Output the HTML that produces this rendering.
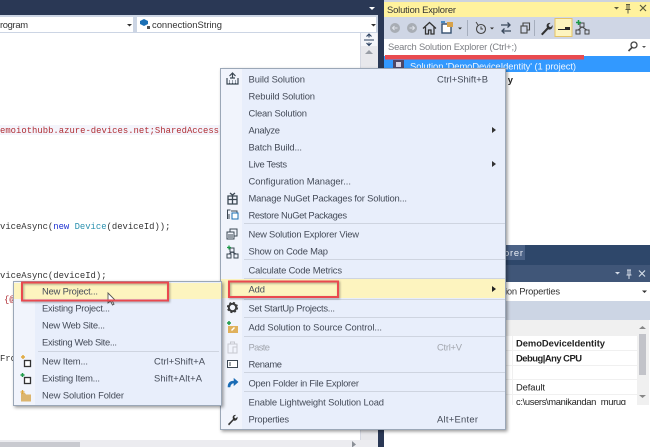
<!DOCTYPE html>
<html><head><meta charset="utf-8"><style>
html,body{margin:0;padding:0;background:#fff;width:650px;height:447px;overflow:hidden}
svg{display:block}
text{font-family:"Liberation Sans",sans-serif;font-size:9.4px;fill:#444b58;dominant-baseline:auto}
.c text{font-family:"Liberation Mono",monospace;font-size:8.9px;fill:#333}
.g{filter:url(#b)}
</style></head><body>
<svg width="650" height="447" viewBox="0 0 650 447" xmlns="http://www.w3.org/2000/svg">
<defs>
<filter id="b" x="-2%" y="-2%" width="104%" height="104%"><feGaussianBlur stdDeviation="0.3"/></filter>
<filter id="s" x="-5%" y="-5%" width="110%" height="110%"><feDropShadow dx="1.5" dy="1.5" stdDeviation="1.5" flood-color="#000" flood-opacity=".4"/></filter>
<filter id="r" x="-5%" y="-20%" width="110%" height="140%"><feDropShadow dx="1" dy="1" stdDeviation="1" flood-color="#000" flood-opacity=".35"/></filter>
</defs>
<rect width="650" height="447" fill="#fff"/>
<g class="g">
<!-- top editor chrome -->
<rect width="378" height="16" fill="#293955"/>
<path d="M369 7h6l-3 3z" fill="#fff"/>
<rect y="15" width="378" height="18" fill="#ccd5e4"/>
<rect y="17" width="133" height="15" fill="#fff"/>
<rect x="137" y="17" width="239" height="15" fill="#fff"/>
<path d="M127 24h5l-2.500 2.500z" fill="#333"/>
<path d="M371 24h5l-2.500 2.500z" fill="#333"/>
<text x="0" y="28" textLength="28" fill="#333" style="fill:#333">rogram</text>
<text x="152" y="28" textLength="70" style="fill:#333">connectionString</text>
<path d="M140 21l4-2 4 2v3l-4 2-4-2z" fill="#1c6fb5"/><rect x="147" y="26" width="3" height="3" fill="#555"/>
<!-- editor scrollbar -->
<rect x="360" y="33" width="18" height="407" fill="#e8e8ec"/>
<rect x="360" y="33" width="1" height="407" fill="#d5d8e2"/>
<rect x="361" y="33" width="16" height="13" fill="#f5f6fa"/>
<path d="M364 40h10M369 34.500v3M369 42.500v3M366.500 36.500l2.500-2.500 2.500 2.500M366.500 43l2.500 2.500 2.500-2.500" stroke="#2a3f5f" stroke-width="1.100" fill="none"/>
<path d="M365 54h8l-4-4z" fill="#9a9ea6"/>
<!-- splitter -->
<rect x="378" width="6" height="447" fill="#293955"/>
<!-- bottom scrollbar -->
<rect y="440" width="378" height="7" fill="#ececf0"/>
<rect y="442" width="80" height="5" fill="#c9cad0"/>
<path d="M352 441l4 3.500-4 3z" fill="#8b8f96"/>
<!-- code -->
<rect x="0" y="125" width="220" height="10" fill="#f4f4fb"/>
<g class="c">
<text x="0" y="133" textLength="219" style="fill:#b02f35">emoiothubb.azure-devices.net;SharedAccess</text>
<text x="0" y="229"><tspan>viceAsync(</tspan><tspan style="fill:#1b2fd0">new</tspan><tspan> </tspan><tspan style="fill:#2b91af">Device</tspan><tspan>(deviceId));</tspan></text>
<text x="0" y="278">viceAsync(deviceId);</text>
<text x="4" y="302" style="fill:#b02f35">{@</text>
<text x="0" y="361">Fro</text>
</g>
<!-- Solution explorer -->
<rect x="384" width="266" height="2" fill="#cdd3de"/>
<rect x="384" y="2" width="266" height="15" fill="#fff29d"/>
<text x="387" y="13" textLength="69" style="fill:#333">Solution Explorer</text>
<path d="M614 7h5l-2.500 2.500z" fill="#5b5a3e"/>
<path d="M626 4.500h4M627 4.500v5h2v-5M625.500 9.500h5M628 9.500v4" stroke="#5b5a3e" fill="none"/>
<path d="M640 5l6 6M646 5l-6 6" stroke="#5b5a3e" stroke-width="1.200"/>
<rect x="384" y="17" width="266" height="22" fill="#cfd6e5"/>
<circle cx="395" cy="28" r="5" fill="#a8adb4"/><path d="M397.500 28h-5M394.500 26l-2 2 2 2" stroke="#dfe3ea" fill="none"/>
<circle cx="412" cy="28" r="5" fill="#a8adb4"/><path d="M409.500 28h5M412.500 26l2 2-2 2" stroke="#dfe3ea" fill="none"/>
<path d="M423 28.500l6.500-6 6.500 6M425.500 27v7h3v-4h2.500v4h3v-7" stroke="#333" stroke-width="1.300" fill="none"/>
<rect x="442" y="24" width="9" height="9" fill="#fff" stroke="#35506f" stroke-width="1.400"/><rect x="447" y="22" width="6" height="5" fill="#d8a24a"/><path d="M441 22h4" stroke="#1c6fb5" stroke-width="1.500"/>
<path d="M458 27.500h4l-2 2z" fill="#333"/>
<rect x="467" y="20" width="1" height="16" fill="#a6aebd"/>
<circle cx="481" cy="29" r="4.500" fill="none" stroke="#444" stroke-width="1.100"/><path d="M481 26.500v2.500h2M476 22l2 3" stroke="#444" fill="none"/>
<path d="M490 27.500h4l-2 2z" fill="#333"/>
<path d="M501 25h9M507.500 22.500l2.500 2.500-2.500 2.500M511 31h-9M504.500 28.500l-2.500 2.500 2.500 2.500" stroke="#3b4a5c" stroke-width="1.300" fill="none"/>
<rect x="521" y="26" width="6" height="7" fill="none" stroke="#444" stroke-width="1.100"/><path d="M523 26v-3h6.500v7h-2.500" fill="none" stroke="#444" stroke-width="1.100"/>
<rect x="534" y="20" width="1" height="16" fill="#a6aebd"/>
<path d="M541 34l6-6.500c-1.200-2.500.5-5 3.500-4.500l-2 2 .8 1.700 1.700.4 1.500-2c.7 3-1.700 5.200-4.300 4.300l-5.700 6z" fill="#333"/>
<rect x="555" y="18.500" width="17" height="18" fill="#fdf4bf" stroke="#e5c365"/>
<path d="M558 29h7v-2h5v3h-12z" fill="#2c2c2c"/>
<rect x="576" y="30" width="4" height="4" fill="none" stroke="#444"/><rect x="585" y="30" width="4" height="4" fill="none" stroke="#444"/><rect x="580" y="23" width="4" height="4" fill="none" stroke="#444"/>
<path d="M582 27l-4 3M582 27l5 3" stroke="#444" fill="none"/><path d="M576 22.500h5M578.500 20v5" stroke="#1d9a46" stroke-width="1.500"/>
<rect x="385" y="39" width="265" height="16" fill="#fff"/>
<text x="388" y="50" textLength="129" style="fill:#7d7f84">Search Solution Explorer (Ctrl+;)</text>
<circle cx="634" cy="45" r="3" fill="none" stroke="#444" stroke-width="1.300"/><path d="M632 47.500l-3.500 3.500" stroke="#444" stroke-width="1.600"/>
<path d="M642 46h4l-2 2z" fill="#555"/>
<rect x="384" y="56" width="266" height="16" fill="#3399ff"/>
<rect x="393" y="60" width="11" height="11" fill="#4e4666"/><rect x="396" y="62" width="5" height="5" fill="#d7d3e4"/>
<text x="410" y="69.500" textLength="166" style="fill:#eef6ff">Solution 'DemoDeviceIdentity' (1 project)</text>
<text x="503" y="83" style="font-weight:bold;fill:#222" textLength="10">ty</text>
<rect x="385" y="55" width="199" height="4.500" fill="#e94b50"/>
<!-- properties -->
<rect x="384" y="245" width="266" height="20" fill="#2f466b"/>
<rect x="490" y="245" width="35" height="15" fill="#4b6286"/>
<text x="504" y="256" textLength="19" style="fill:#e8edf5">orer</text>
<rect x="384" y="265" width="266" height="17" fill="#3f5678"/>
<path d="M615 272h5l-2.500 2.500z" fill="#d5dce8"/>
<path d="M627 270h4M628 270v5h2v-5M626.500 275h5M629 275v4" stroke="#d5dce8" fill="none"/>
<path d="M639 270.500l6 6M645 270.500l-6 6" stroke="#d5dce8" stroke-width="1.200"/>
<rect x="384" y="282" width="266" height="19" fill="#fff"/>
<text x="505" y="294.500" textLength="55" style="fill:#333">ion Properties</text>
<path d="M642 290.500h5l-2.500 2.500z" fill="#333"/>
<rect x="384" y="301" width="266" height="19" fill="#ccd5e4"/>
<rect x="384" y="320" width="253" height="16" fill="#f0f0f0"/>
<rect x="637" y="320" width="12" height="85" fill="#f0f0f0"/>
<rect x="639" y="334" width="7" height="41" fill="#c2c3c9"/>
<path d="M639 329h7l-3.500-3z" fill="#888"/><path d="M639 395h7l-3.500 3z" fill="#888"/>
<path d="M384 350.500h253M384 365.500h253M384 379.500h253M384 394.500h253" stroke="#f0f0f0"/>
<rect x="512" y="336" width="1" height="69" fill="#f0f0f0"/>
<text x="516" y="346.500" textLength="89" style="font-weight:bold;fill:#222">DemoDeviceIdentity</text>
<text x="516" y="361.500" textLength="66" style="font-weight:bold;fill:#222">Debug|Any CPU</text>
<text x="516" y="390.500" textLength="29" style="fill:#222">Default</text>
<clipPath id="cl"><rect x="516" y="396" width="120" height="9"/></clipPath>
<text x="516" y="405" textLength="110" clip-path="url(#cl)" style="fill:#222">c:\users\manikandan_murug</text>
</g>
<!-- main menu -->
<rect x="220.500" y="68.500" width="285" height="361" fill="#e8eefb" stroke="#9ba7b7" filter="url(#s)"/>
<g class="g">
<rect x="221" y="69" width="21" height="360" fill="#f1f4fc"/>
<g fill="#ced4e0">
<rect x="244" y="223" width="261" height="1"/><rect x="244" y="259" width="261" height="1"/><rect x="244" y="278" width="261" height="1"/><rect x="244" y="299" width="261" height="1"/><rect x="244" y="317" width="261" height="1"/><rect x="244" y="336" width="261" height="1"/><rect x="244" y="372" width="261" height="1"/><rect x="244" y="391" width="261" height="1"/>
</g>
<rect x="221" y="279" width="284" height="19" fill="#fdf4bf"/>
<text x="248.500" y="82.500" textLength="56.500">Build Solution</text>
<text x="248.500" y="99.500" textLength="66.500">Rebuild Solution</text>
<text x="248.500" y="116.500" textLength="58.500">Clean Solution</text>
<text x="248.500" y="133.500" textLength="31.500">Analyze</text>
<text x="248.500" y="150.500" textLength="53.500">Batch Build...</text>
<text x="248.500" y="167.500" textLength="38.500">Live Tests</text>
<text x="248.500" y="184.500" textLength="102.500">Configuration Manager...</text>
<text x="248.500" y="201.500" textLength="158.500">Manage NuGet Packages for Solution...</text>
<text x="248.500" y="218.500" textLength="98.500">Restore NuGet Packages</text>
<text x="248.500" y="237.500" textLength="110.500">New Solution Explorer View</text>
<text x="248.500" y="254.500" textLength="79.500">Show on Code Map</text>
<text x="248.500" y="273.500" textLength="93.500">Calculate Code Metrics</text>
<text x="248.500" y="292.500" textLength="16.500">Add</text>
<text x="248.500" y="311.500" textLength="86.500">Set StartUp Projects...</text>
<text x="248.500" y="330.500" textLength="133.500">Add Solution to Source Control...</text>
<text x="248.500" y="350.500" textLength="21.500" style="fill:#a2a6ae">Paste</text>
<text x="248.500" y="367.500" textLength="33.500">Rename</text>
<text x="248.500" y="386.500" textLength="110.500">Open Folder in File Explorer</text>
<text x="248.500" y="405.500" textLength="135.500">Enable Lightweight Solution Load</text>
<text x="248.500" y="422.500" textLength="40.500">Properties</text>
<text x="437" y="82.500" textLength="51">Ctrl+Shift+B</text>
<text x="437" y="350.500" textLength="25" style="fill:#a2a6ae">Ctrl+V</text>
<text x="437" y="422.500" textLength="41">Alt+Enter</text>
<path d="M492 127l4 3-4 3zM492 161l4 3-4 3z" fill="#333"/>
<path d="M492 286l4 3-4 3z" fill="#222"/>
<!-- menu icons -->
<path d="M227 78v6h11v-6M230 78h5M232.500 73v5M229.500 76l3-3 3 3" stroke="#3b4653" stroke-width="1.200" fill="none"/><path d="M229 81h1M232 81h1M235 81h1M229 83h1M232 83h1M235 83h1" stroke="#3b4653"/>
<path d="M228 196h9v8h-9zM228 199.500h9M232.500 195v9M230 193l2.500 2 2.500-2" stroke="#3b4653" stroke-width="1.300" fill="none"/>
<path d="M227.500 219v-9h3M229 219v-5M231 211h6v5" stroke="#3b4653" fill="none"/><rect x="232" y="213" width="6" height="6" fill="#fff" stroke="#1c6fb5"/>
<path d="M227 232h7v7h-7zM230 232v-3h7v7h-3M228 235h5M228 237h5" stroke="#3b4653" fill="none"/>
<rect x="227" y="254" width="4" height="4" fill="none" stroke="#3b4653"/><rect x="234" y="254" width="4" height="4" fill="none" stroke="#3b4653"/><rect x="230" y="248" width="4" height="4" fill="none" stroke="#3b4653"/>
<path d="M232 252l-3 2M232 252l4 2" stroke="#3b4653"/><path d="M227 247.500h4M229 245.500v4" stroke="#1d9a46" stroke-width="1.300"/>
<circle cx="232.500" cy="307.500" r="3.700" fill="none" stroke="#3a3a3a" stroke-width="2"/><circle cx="232.500" cy="307.500" r="5" fill="none" stroke="#3a3a3a" stroke-width="1.200" stroke-dasharray="2 2"/>
<rect x="228" y="326" width="10" height="7" fill="#e0b15c"/><path d="M231 330l3-3 1 1-3 3z" fill="#fff"/><path d="M227 323h4M229 321v4" stroke="#1d9a46" stroke-width="1.500"/>
<path d="M228 344h9v9h-9zM230.500 344v-2h4v2M233 347h4v6h-4z" stroke="#c6c9d0" fill="none"/>
<rect x="227.500" y="360.500" width="10" height="7" fill="#fff" stroke="#3b4653"/><path d="M230 362v4" stroke="#3b4653"/>
<path d="M228 387c0-4 2-6 6-6v-2.500l4 3.500-4 3.500v-2.500c-2 0-3.500 1-4 4z" fill="#1a6cb5" stroke="#1a6cb5" stroke-width=".6"/>
<path d="M228 424l5-5c-1-2.500.5-4.500 3-4l-2 2 1.500 1.500 2-1.700c.5 2.700-1.500 4.500-4 3.700l-4.500 5z" fill="#333"/>
</g>
<rect x="229" y="281.500" width="109" height="15.500" fill="none" stroke="#ea4a50" stroke-width="2" filter="url(#r)"/>
<!-- submenu -->
<rect x="13.500" y="281.500" width="208" height="124" fill="#e8eefb" stroke="#9ba7b7" filter="url(#s)"/>
<g class="g">
<rect x="14" y="282" width="21" height="123" fill="#f1f4fc"/>
<rect x="14" y="283" width="207" height="16" fill="#fdf4bf"/>
<rect x="38" y="351" width="181" height="1" fill="#ced4e0"/>
<text x="42" y="294.500" textLength="56">New Project...</text>
<text x="42" y="311.500" textLength="68">Existing Project...</text>
<text x="42" y="328.500" textLength="63">New Web Site...</text>
<text x="42" y="345.500" textLength="75">Existing Web Site...</text>
<text x="42" y="364.500" textLength="46">New Item...</text>
<text x="42" y="381.500" textLength="58">Existing Item...</text>
<text x="42" y="398.500" textLength="82">New Solution Folder</text>
<text x="154" y="364.500" textLength="51">Ctrl+Shift+A</text>
<text x="154" y="381.500" textLength="48">Shift+Alt+A</text>
<rect x="24.500" y="360.500" width="6" height="6" fill="#fff" stroke="#333" stroke-width="1.300"/><path d="M21 357h4M23 355v4" stroke="#e0a83c" stroke-width="1.500"/>
<rect x="24.500" y="377.500" width="6" height="6" fill="#fff" stroke="#333" stroke-width="1.300"/><path d="M20.500 375h4M22.500 373v4" stroke="#1d9a46" stroke-width="1.500"/>
<path d="M21 393h4l1 1.500h5v7h-10z" fill="#dcb56e"/><path d="M20.500 392h4M22.500 390v4" stroke="#e0a83c" stroke-width="1.300"/>
<path d="M108 293v10l2.500-2 2 4 1.500-.8-2-3.800 3-.4z" fill="#fff" stroke="#555" stroke-width=".9"/>
</g>
<rect x="22" y="282.500" width="146" height="18" fill="none" stroke="#ea4a50" stroke-width="2" filter="url(#r)"/>
</svg>
</body></html>
